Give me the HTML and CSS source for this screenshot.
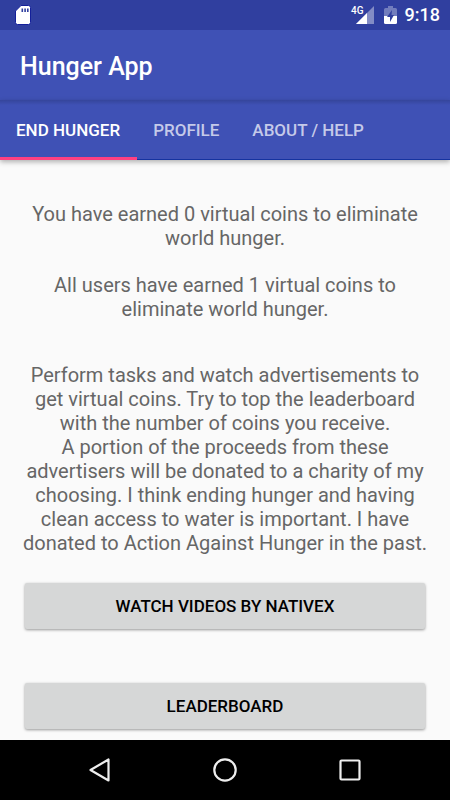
FILE: index.html
```html
<!DOCTYPE html>
<html lang="en">
<head>
<meta charset="utf-8">
<meta name="viewport" content="width=device-width, initial-scale=1">
<title>Hunger App</title>
<link rel="stylesheet" href="styles.css">
</head>
<body>
<div class="status">
  <svg class="sd" width="16" height="20" viewBox="0 0 16 20" aria-hidden="true">
    <path d="M6 .5H13.500Q15.500 .5 15.500 2.500V17.500Q15.500 19.500 13.500 19.500H2.500Q.5 19.500 .5 17.500V6Z" fill="#fff" stroke="#14209a" stroke-width="1"/>
    <path d="M6.500 3.500h1.600v3.500H6.500zM9.300 3.500h1.600v3.500H9.300zM12 3.500h1.600v3.500H12z" fill="#303f9f"/>
  </svg>
  <span class="network">4G</span>
  <svg class="signal" width="18" height="18" viewBox="0 0 18 18" aria-hidden="true">
    <path d="M0 18L18 0V18Z" fill="#838cc5"/>
    <path d="M0 18L11 7V18Z" fill="#fff"/>
  </svg>
  <svg class="battery" width="13" height="18" viewBox="0 0 13 18" aria-hidden="true">
    <path d="M4 0H9V2H11.500Q13 2 13 3.500V10H0V3.500Q0 2 1.500 2H4Z" fill="#727dbd"/>
    <path d="M0 10H13V16.500Q13 18 11.500 18H1.500Q0 18 0 16.500Z" fill="#fff"/>
    <path d="M8 4L3 11H6V16L10 9H7.500Z" fill="#303f9f"/>
  </svg>
  <time class="clock">9:18</time>
</div>
<header class="appbar"><h1>Hunger App</h1></header>
<nav class="tabs">
  <a class="tab active" href="#" aria-current="page">END HUNGER</a>
  <a class="tab" href="#">PROFILE</a>
  <a class="tab" href="#">ABOUT / HELP</a>
</nav>
<main class="content">
  <p>You have earned 0 virtual coins to eliminate world hunger.</p>
  <p>All users have earned 1 virtual coins to eliminate world hunger.</p>
  <p class="about">Perform tasks and watch advertisements to get virtual coins. Try to top the leaderboard with the number of coins you receive.<br>A portion of the proceeds from these advertisers will be donated to a charity of my choosing. I think ending hunger and having clean access to water is important. I have donated to Action Against Hunger in the past.</p>
  <div class="actions">
    <button type="button">WATCH VIDEOS BY NATIVEX</button>
    <button type="button">LEADERBOARD</button>
  </div>
</main>
<footer class="navbar">
  <button type="button" aria-label="Back"><svg width="26" height="26" viewBox="0 0 26 26"><path d="M21.500 2.500V23.500L3.500 13Z" fill="none" stroke="#eee" stroke-width="2.200" stroke-linejoin="round"/></svg></button>
  <button type="button" aria-label="Home"><svg width="26" height="26" viewBox="0 0 26 26"><circle cx="13" cy="13" r="10.700" fill="none" stroke="#eee" stroke-width="2.200"/></svg></button>
  <button type="button" aria-label="Recent apps"><svg width="26" height="26" viewBox="0 0 26 26"><rect x="3.500" y="3.500" width="19" height="19" rx="1" fill="none" stroke="#eee" stroke-width="2.200"/></svg></button>
</footer>
</body>
</html>
```
FILE: styles.css
```css
* {
  box-sizing: border-box;
}

body {
  margin: 0;
  min-height: 100vh;
  display: flex;
  flex-direction: column;
  background: #fafafa;
  color: #666;
  font-family: Roboto, sans-serif;
}

svg {
  display: block;
}

.status {
  display: flex;
  align-items: center;
  height: 30px;
  padding: 0 10px 0 15px;
  background: #303f9f;
  color: #fff;
}

.network {
  margin-left: auto;
  align-self: flex-start;
  padding-top: 5px;
  font-size: 10px;
  line-height: 12px;
  font-weight: 500;
}

.signal {
  margin-left: -8px;
}

.battery {
  margin: 0 8px 0 10px;
}

.clock {
  font-size: 18px;
  line-height: 32px;
  font-weight: 500;
}

.appbar {
  display: flex;
  align-items: center;
  height: 70px;
  padding: 0 20px;
  background: #3f51b5;
  color: #fff;
}

.appbar h1 {
  margin: 0;
  padding-top: 3px;
  font-size: 25px;
  line-height: 32px;
  font-weight: 500;
}

.tabs {
  display: flex;
  height: 60px;
  background: linear-gradient(#35459b, #3f51b5 5px);
  border-bottom: 1px solid #1533a0;
  box-shadow: 0 2px 5px rgba(0, 0, 0, 0.3);
}

.tab {
  height: 60px;
  padding: 0 17px 0 16px;
  font-size: 17px;
  line-height: 60px;
  font-weight: 500;
  color: #c5cae9;
  text-decoration: none;
  white-space: nowrap;
}

.tab.active {
  color: #fff;
  box-shadow: inset 0 -3px #ff4081;
}

.content {
  flex: 1;
  padding: 42px 20px 8px;
  text-align: center;
}

.content p {
  margin: 0 0 23px;
  font-size: 20px;
  line-height: 24px;
}

.content .about {
  margin: 42px 0 28px;
}

.actions {
  display: grid;
  gap: 54px;
  padding: 0 5px;
}

.actions button {
  height: 46px;
  border: 0;
  border-radius: 2px;
  background: #d6d7d7;
  color: #000;
  font: 500 17px/20px Roboto, sans-serif;
  box-shadow: 0 1px 3px rgba(0, 0, 0, 0.4);
}

.navbar {
  display: flex;
  justify-content: center;
  gap: 25px;
  height: 60px;
  background: #000;
}

.navbar button {
  display: flex;
  align-items: center;
  justify-content: center;
  width: 100px;
  padding: 0;
  border: 0;
  background: none;
}
```
